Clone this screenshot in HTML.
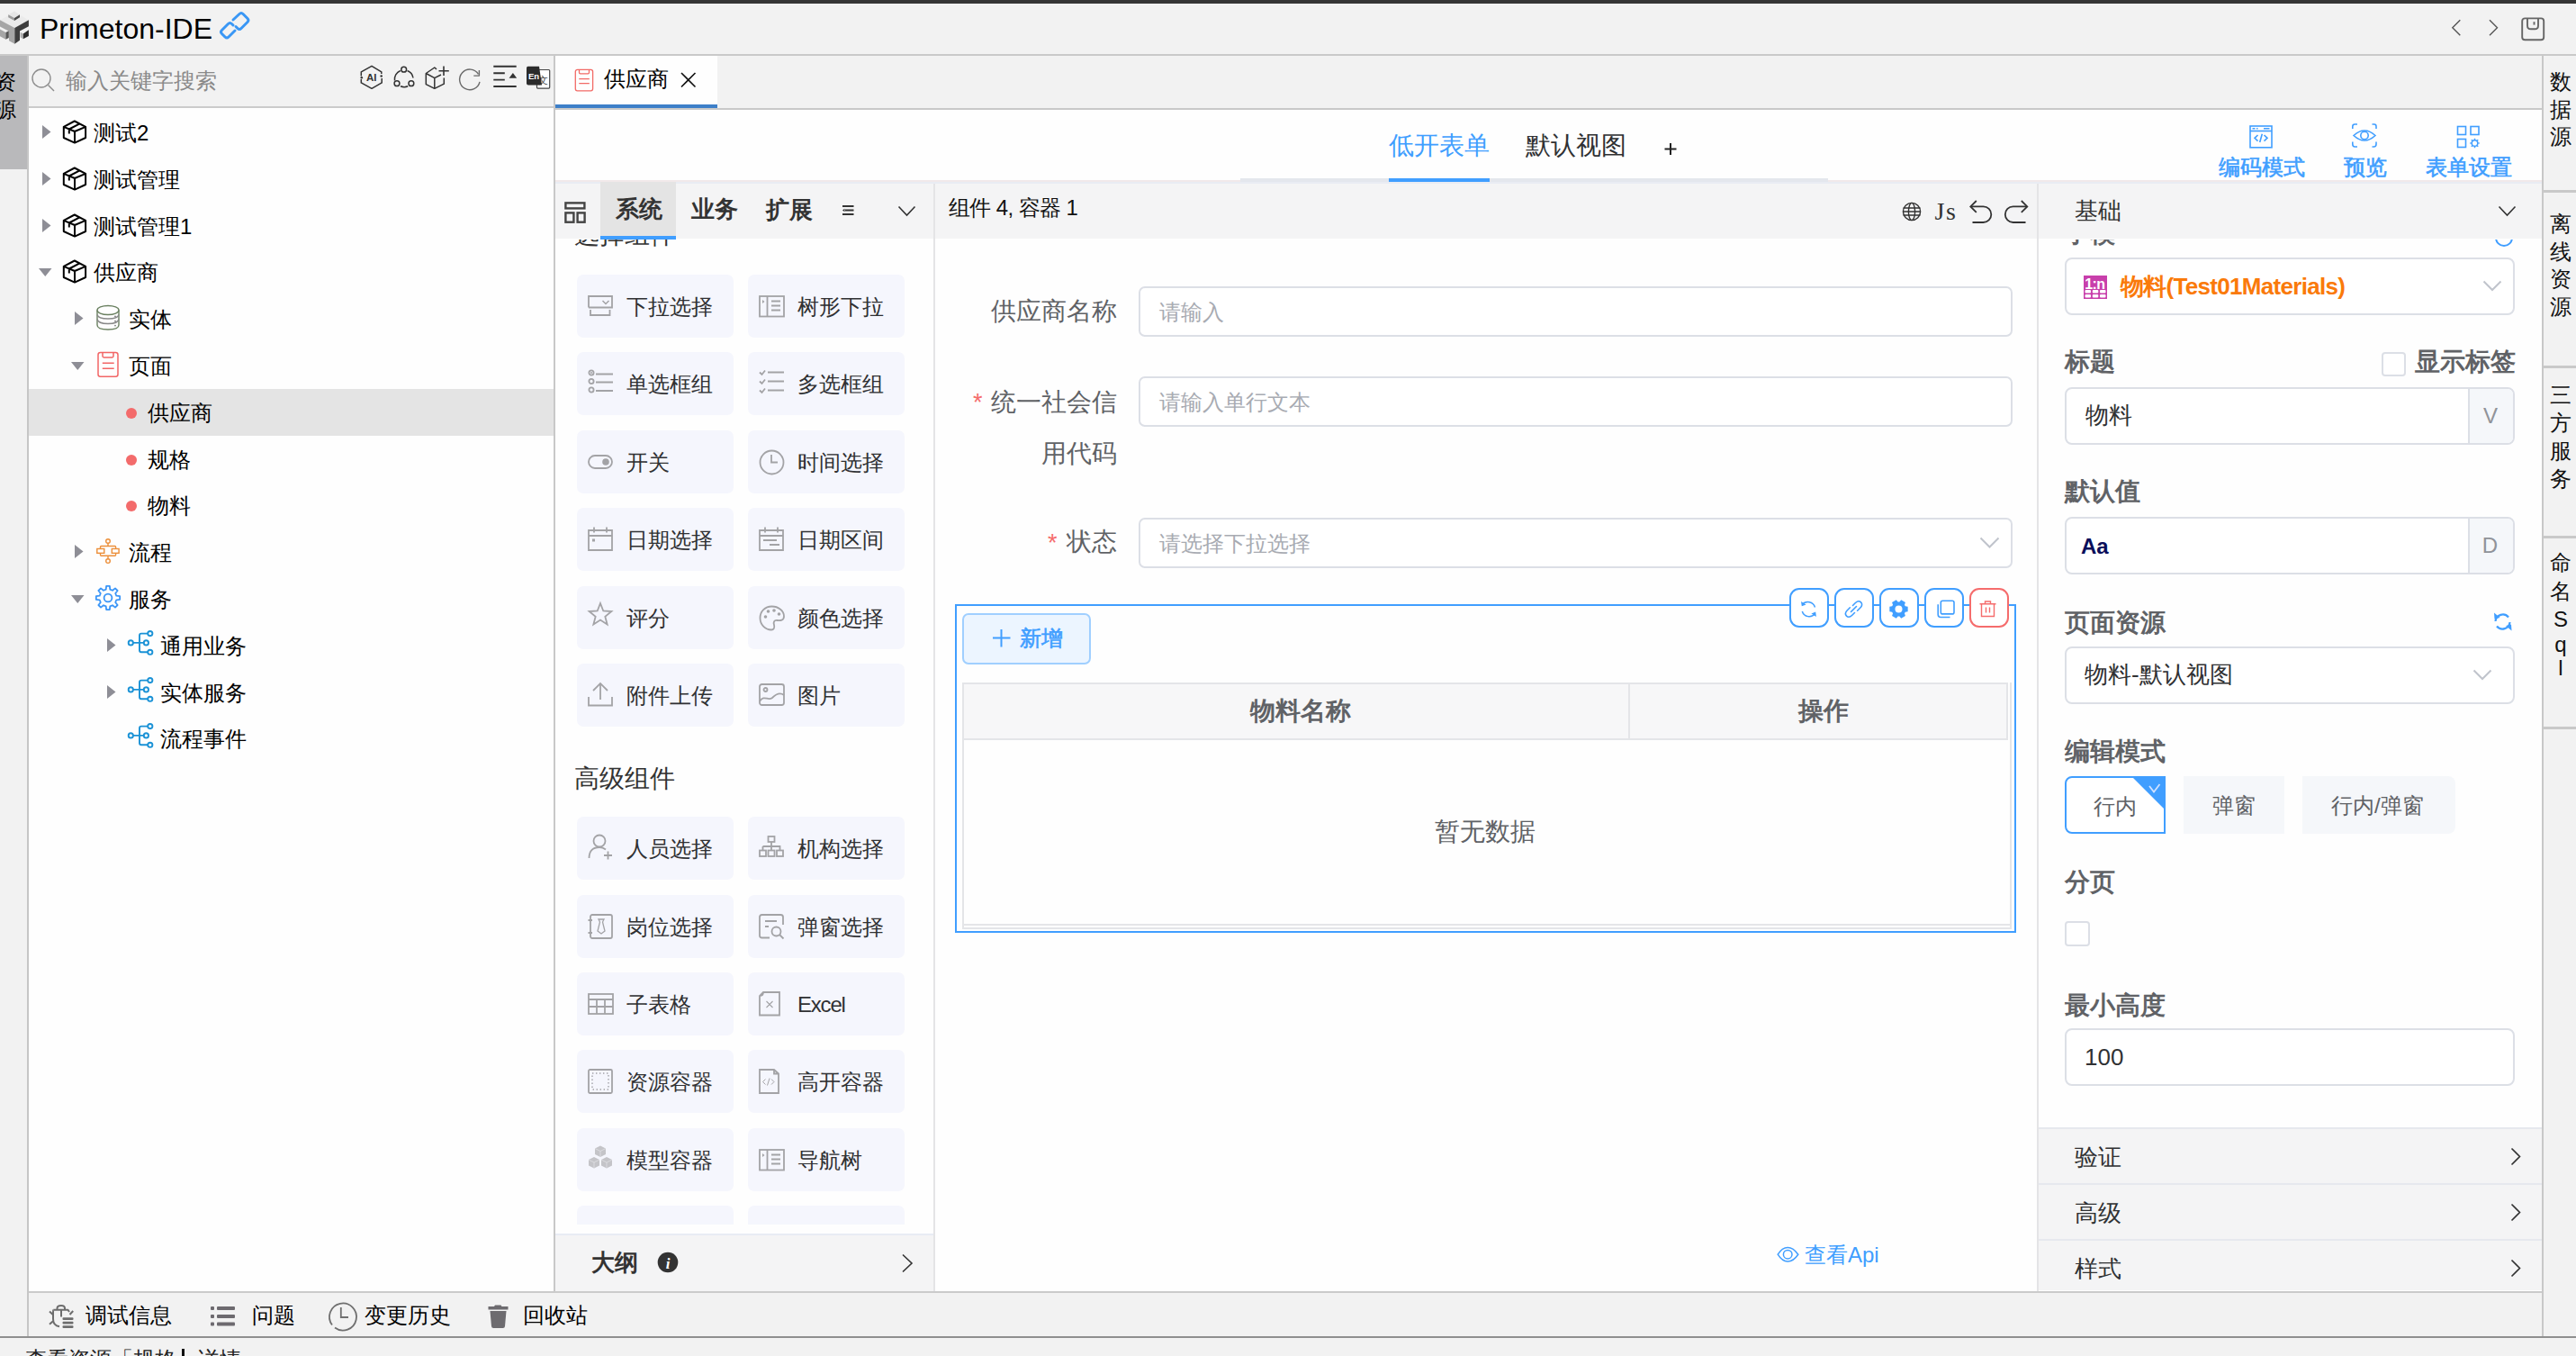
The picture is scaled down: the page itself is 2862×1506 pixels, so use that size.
<!DOCTYPE html>
<html><head><meta charset="utf-8">
<style>
*{box-sizing:border-box;margin:0;padding:0}
html,body{width:2862px;height:1506px;overflow:hidden;background:#f2f2f2;font-family:"Liberation Sans",sans-serif;color:#222}
.a{position:absolute}
.t{position:absolute;white-space:nowrap;line-height:1}
svg{position:absolute;overflow:visible}
</style></head><body>
<!-- frame -->
<!-- top dark strip -->
<div class="a" style="left:0;top:0;width:2862px;height:4px;background:#363636"></div>
<!-- title bar -->
<div class="a" style="left:0;top:4px;width:2862px;height:56px;background:#f2f2f2"></div>
<div class="a" style="left:0;top:60px;width:2862px;height:2px;background:#c9c9c9"></div>

<!-- left strip -->
<div class="a" style="left:0;top:62px;width:30px;height:1422px;background:#f2f2f2"></div>
<div class="a" style="left:0;top:62px;width:30px;height:126px;background:#b9b9bb"></div>
<div class="a" style="left:30px;top:62px;width:2px;height:1422px;background:#c6c6c6"></div>

<!-- left sidebar -->
<div class="a" id="side" style="left:32px;top:62px;width:584px;height:1372px;background:#fefefe"></div>
<div class="a" style="left:32px;top:62px;width:584px;height:56px;background:#f2f2f2"></div>
<div class="a" style="left:32px;top:118px;width:584px;height:2px;background:#cbcbcb"></div>
<div class="a" style="left:615px;top:62px;width:2px;height:1372px;background:#c8c8c8"></div>

<!-- editor tab bar -->
<div class="a" style="left:617px;top:62px;width:2207px;height:59px;background:#f2f2f2"></div>
<div class="a" style="left:617px;top:120px;width:2207px;height:2px;background:#c9c9c9"></div>
<!-- toolbar -->
<div class="a" style="left:617px;top:122px;width:2207px;height:79px;background:#fefefe"></div>
<!-- palette -->
<div class="a" style="left:617px;top:201px;width:421px;height:1233px;background:#fefefe"></div>
<div class="a" style="left:617px;top:201px;width:421px;height:64px;background:#f4f4f5"></div>
<div class="a" style="left:1037px;top:201px;width:2px;height:1233px;background:#e4e4e6"></div>
<!-- canvas -->
<div class="a" style="left:1039px;top:201px;width:1224px;height:1233px;background:#fefefe"></div>
<div class="a" style="left:1039px;top:201px;width:1224px;height:64px;background:#f4f4f5"></div>
<div class="a" style="left:2263px;top:201px;width:2px;height:1233px;background:#e4e4e6"></div>
<!-- props -->
<div class="a" style="left:2265px;top:201px;width:559px;height:1233px;background:#fefefe"></div>
<div class="a" style="left:2265px;top:201px;width:559px;height:64px;background:#f4f4f5"></div>

<!-- right strip -->
<div class="a" style="left:2824px;top:62px;width:2px;height:1422px;background:#c8c8c8"></div>
<div class="a" style="left:2826px;top:62px;width:36px;height:1422px;background:#f2f2f2"></div>

<!-- bottom bar -->
<div class="a" style="left:32px;top:1434px;width:2792px;height:2px;background:#cbcbcb"></div>
<div class="a" style="left:32px;top:1436px;width:2792px;height:48px;background:#f2f2f2"></div>
<div class="a" style="left:0;top:1484px;width:2862px;height:2px;background:#8f8f8f"></div>
<div class="a" style="left:0;top:1486px;width:2862px;height:20px;background:#f2f2f2"></div>


<!-- sidebar -->
<svg style="left:0;top:8px" width="40" height="48" viewBox="0 0 40 48">
<path d="M0 14.2 L16.3 5.5 L31.9 14.2 L16.3 23Z" fill="#ebebeb"/>
<path d="M0 14.2 L16.3 23 V40.7 L10 37.2 V26.8 L0 21.5Z" fill="#a6a6a6"/>
<path d="M16.3 23 L31.9 14.2 V21.2 L22 26.6 V36.8 L16.3 40.7Z" fill="#3e3e3e"/>
<path d="M9.2 8.2 L16 4.5 L22 8.2 L16 12Z" fill="#e6e6e6"/><path d="M9.2 8.2 L16 12 V15 L9.2 11.3Z" fill="#9c9c9c"/><path d="M16 12 L22 8.2 V11.3 L16 15Z" fill="#474747"/>
<path d="M22.6 27.7 L25.8 29.5 V35.3 L22.6 33.6Z" fill="#b0b0b0"/><path d="M25.8 29.5 L31.9 25.2 V32 L25.8 35.3Z" fill="#2b2b2b"/>
<path d="M0 24.5 L6.4 28 V35.7 L0 32.2Z" fill="#a6a6a6"/><path d="M6.4 28 L9.8 26.2 V34 L6.4 35.7Z" fill="#575757"/>
</svg>
<div class="t" style="left:44px;top:16px;font-size:32px;color:#000;letter-spacing:0px">Primeton-IDE</div>
<svg style="left:244px;top:12px" width="34" height="34" viewBox="0 0 34 34"><g fill="none" stroke="#3a97f5" stroke-width="3" stroke-linecap="round"><path d="M15 10 L22 3.5 Q24 1.5 26 3.5 L31 8.5 Q33 10.5 31 12.5 L24 19.5 Q22 21.5 20 19.5 L18 17.5"/><path d="M17 22 L10 29 Q8 31 6 29 L2.5 25.5 Q0.5 23.5 2.5 21.5 L9.5 14.5 Q11.5 12.5 13.5 14.5 L15 16"/></g></svg>
<div class="t" style="left:-6px;top:75px;font-size:24px;color:#000;line-height:31px;width:30px;white-space:normal">资<br>源</div>
<svg style="left:34px;top:75px" width="28" height="28" viewBox="0 0 28 28"><circle cx="12" cy="12" r="10" fill="none" stroke="#8c8c8c" stroke-width="1.4"/><path d="M19.5 19.5 L26 26" stroke="#8c8c8c" stroke-width="1.4"/></svg>
<div class="t" style="left:73px;top:78px;font-size:24px;color:#8a8a8a">输入关键字搜索</div>
<div class="a" style="left:32px;top:432px;width:583px;height:52px;background:#e4e4e4"></div>
<svg style="left:47px;top:139px" width="10" height="15"><path d="M0 0L9.5 7.5L0 15Z" fill="#8e8e96"/></svg>
<svg style="left:66px;top:130px" width="34" height="34"><path d="M16.8 4.5 L29.1 10.8 V23 L17 28.6 L4.8 23 V10.8 Z M4.8 10.8 L17 16 L29.1 10.8 M17 16 V28.6 M10.8 18.5 V13.5 L21.6 7.8" fill="none" stroke="#000" stroke-width="2" stroke-linejoin="round"/></svg>
<div class="t" style="left:104px;top:136px;font-size:24px;color:#000">测试2</div>
<svg style="left:47px;top:191px" width="10" height="15"><path d="M0 0L9.5 7.5L0 15Z" fill="#8e8e96"/></svg>
<svg style="left:66px;top:182px" width="34" height="34"><path d="M16.8 4.5 L29.1 10.8 V23 L17 28.6 L4.8 23 V10.8 Z M4.8 10.8 L17 16 L29.1 10.8 M17 16 V28.6 M10.8 18.5 V13.5 L21.6 7.8" fill="none" stroke="#000" stroke-width="2" stroke-linejoin="round"/></svg>
<div class="t" style="left:104px;top:188px;font-size:24px;color:#000">测试管理</div>
<svg style="left:47px;top:243px" width="10" height="15"><path d="M0 0L9.5 7.5L0 15Z" fill="#8e8e96"/></svg>
<svg style="left:66px;top:234px" width="34" height="34"><path d="M16.8 4.5 L29.1 10.8 V23 L17 28.6 L4.8 23 V10.8 Z M4.8 10.8 L17 16 L29.1 10.8 M17 16 V28.6 M10.8 18.5 V13.5 L21.6 7.8" fill="none" stroke="#000" stroke-width="2" stroke-linejoin="round"/></svg>
<div class="t" style="left:104px;top:240px;font-size:24px;color:#000">测试管理1</div>
<svg style="left:43px;top:298px" width="15" height="9"><path d="M0 0H14.5L7.25 9Z" fill="#8e8e96"/></svg>
<svg style="left:66px;top:285px" width="34" height="34"><path d="M16.8 4.5 L29.1 10.8 V23 L17 28.6 L4.8 23 V10.8 Z M4.8 10.8 L17 16 L29.1 10.8 M17 16 V28.6 M10.8 18.5 V13.5 L21.6 7.8" fill="none" stroke="#000" stroke-width="2" stroke-linejoin="round"/></svg>
<div class="t" style="left:104px;top:291px;font-size:24px;color:#000">供应商</div>
<svg style="left:83px;top:346px" width="10" height="15"><path d="M0 0L9.5 7.5L0 15Z" fill="#8e8e96"/></svg>
<svg style="left:104px;top:335px" width="34" height="34"><g fill="none" stroke="#6a8060" stroke-width="1.4"><ellipse cx="16" cy="9.5" rx="12" ry="5"/><path d="M4 9.5 V26 Q4 31 16 31 Q28 31 28 26 V9.5"/><path d="M4 14.5 Q5 19 16 19 Q27 19 28 14.5" stroke="#888"/><path d="M4 19.5 Q5 24.5 16 24.5 Q27 24.5 28 19.5" stroke="#888"/></g><g fill="#777"><circle cx="24" cy="16.3" r="0.9"/><circle cx="24" cy="21.6" r="0.9"/><circle cx="24" cy="26.6" r="0.9"/></g></svg>
<div class="t" style="left:142.5px;top:343px;font-size:24px;color:#000">实体</div>
<svg style="left:79px;top:402px" width="15" height="9"><path d="M0 0H14.5L7.25 9Z" fill="#8e8e96"/></svg>
<svg style="left:104px;top:388px" width="34" height="34"><g fill="none" stroke="#f26666" stroke-width="1.5"><rect x="5" y="3.5" width="22" height="26.8" rx="2.5"/><path d="M10 3.5 V7.5 Q10 8.9 11.4 8.9 H20.6 Q22 8.9 22 7.5 V3.5"/><path d="M9.8 15.2 H22.7 M9.8 21.3 H22.7"/></g></svg>
<div class="t" style="left:142.5px;top:395px;font-size:24px;color:#000">页面</div>
<div class="a" style="left:140px;top:453px;width:12px;height:12px;border-radius:6px;background:#f36b6b"></div>
<div class="t" style="left:164px;top:447px;font-size:24px;color:#000">供应商</div>
<div class="a" style="left:140px;top:505px;width:12px;height:12px;border-radius:6px;background:#f36b6b"></div>
<div class="t" style="left:164px;top:499px;font-size:24px;color:#000">规格</div>
<div class="a" style="left:140px;top:556px;width:12px;height:12px;border-radius:6px;background:#f36b6b"></div>
<div class="t" style="left:164px;top:550px;font-size:24px;color:#000">物料</div>
<svg style="left:83px;top:605px" width="10" height="15"><path d="M0 0L9.5 7.5L0 15Z" fill="#8e8e96"/></svg>
<svg style="left:104px;top:594px" width="34" height="34"><g fill="none" stroke="#ec8f3a" stroke-width="1.4"><circle cx="16" cy="7" r="2.3"/><circle cx="16" cy="29.1" r="2.3"/><path d="M16 9.3 V12.5 M16 23.3 V26.8"/><rect x="7.5" y="12.5" width="17.1" height="10.8" rx="1"/><rect x="3.8" y="15.5" width="8" height="4.8" fill="#fff"/><rect x="20.3" y="15.5" width="7.8" height="4.8" fill="#fff"/></g></svg>
<div class="t" style="left:142.5px;top:602px;font-size:24px;color:#000">流程</div>
<svg style="left:79px;top:661px" width="15" height="9"><path d="M0 0H14.5L7.25 9Z" fill="#8e8e96"/></svg>
<svg style="left:102px;top:647px" width="34" height="34"><g fill="none" stroke="#3a95f7" stroke-width="1.8" stroke-linejoin="round"><path d="M27.32 14.72 L31.17 15.14 L31.17 18.86 L27.32 19.28 L26.21 21.98 L28.62 25.00 L26.00 27.62 L22.98 25.21 L20.28 26.32 L19.86 30.17 L16.14 30.17 L15.72 26.32 L13.02 25.21 L10.00 27.62 L7.38 25.00 L9.79 21.98 L8.68 19.28 L4.83 18.86 L4.83 15.14 L8.68 14.72 L9.79 12.02 L7.38 9.00 L10.00 6.38 L13.02 8.79 L15.72 7.68 L16.14 3.83 L19.86 3.83 L20.28 7.68 L22.98 8.79 L26.00 6.38 L28.62 9.00 L26.21 12.02Z"/><circle cx="18" cy="17" r="4.4"/></g></svg>
<div class="t" style="left:142.5px;top:654px;font-size:24px;color:#000">服务</div>
<svg style="left:119px;top:709px" width="10" height="15"><path d="M0 0L9.5 7.5L0 15Z" fill="#8e8e96"/></svg>
<svg style="left:138px;top:697px" width="34" height="34"><g fill="none" stroke="#1b92d6" stroke-width="1.9"><circle cx="7.3" cy="16.9" r="2.6"/><circle cx="24.4" cy="16.9" r="2.6"/><circle cx="28.8" cy="6.6" r="2.6"/><circle cx="28.8" cy="27.3" r="2.6"/><path d="M9.9 16.9 H21.8 M26.2 6.6 H19 Q17 6.6 17 8.6 V25.3 Q17 27.3 19 27.3 H26.2"/></g></svg>
<div class="t" style="left:178px;top:706px;font-size:24px;color:#000">通用业务</div>
<svg style="left:119px;top:761px" width="10" height="15"><path d="M0 0L9.5 7.5L0 15Z" fill="#8e8e96"/></svg>
<svg style="left:138px;top:749px" width="34" height="34"><g fill="none" stroke="#1b92d6" stroke-width="1.9"><circle cx="7.3" cy="16.9" r="2.6"/><circle cx="24.4" cy="16.9" r="2.6"/><circle cx="28.8" cy="6.6" r="2.6"/><circle cx="28.8" cy="27.3" r="2.6"/><path d="M9.9 16.9 H21.8 M26.2 6.6 H19 Q17 6.6 17 8.6 V25.3 Q17 27.3 19 27.3 H26.2"/></g></svg>
<div class="t" style="left:178px;top:758px;font-size:24px;color:#000">实体服务</div>
<svg style="left:138px;top:800px" width="34" height="34"><g fill="none" stroke="#1b92d6" stroke-width="1.9"><circle cx="7.3" cy="16.9" r="2.6"/><circle cx="24.4" cy="16.9" r="2.6"/><circle cx="28.8" cy="6.6" r="2.6"/><circle cx="28.8" cy="27.3" r="2.6"/><path d="M9.9 16.9 H21.8 M26.2 6.6 H19 Q17 6.6 17 8.6 V25.3 Q17 27.3 19 27.3 H26.2"/></g></svg>
<div class="t" style="left:178px;top:809px;font-size:24px;color:#000">流程事件</div>
<svg style="left:394px;top:66px" width="224" height="40" viewBox="0 0 224 40">
<g fill="none" stroke="#333" stroke-width="1.5" stroke-linejoin="round">
<path d="M29.8 16 V13.8 L19 7.3 L7.3 13.8 V18.5"/><path d="M7.3 22 V25.9 L19 32.3 L30.2 25.9 V21"/>
<path d="M50.8 12.5 A10.3 10.3 0 0 0 44.5 23.5"/><path d="M58.6 12.5 A10.3 10.3 0 0 1 65 20.5"/><path d="M51 29.8 A10.3 10.3 0 0 0 59.2 29.8"/>
<circle cx="54.7" cy="11.2" r="2.9"/><circle cx="47" cy="26.7" r="2.9"/><circle cx="62.9" cy="26.7" r="2.9"/>
<path d="M91 10.8 L88.8 9 L79.3 15.5 V27.6 L88.8 32.3 L99.3 27.2 V20.5 M79.3 15.5 L88.8 20.7 L96 17 M88.8 20.7 V32.3"/><path d="M99 7.5 V18 M93.5 12.8 H104.8" stroke-width="1.6"/>
<g transform="translate(0,2.3)"><path d="M139 22.5 A11.3 11.3 0 1 1 137.5 14" stroke="#6a6a6a" stroke-width="1.4"/><path d="M138.4 9.8 V15.8 H132.3" stroke="#6a6a6a" stroke-width="1.4"/></g>
<path d="M154.3 7.8 H179.7 M154.3 15.3 H166.8 M154.3 22.6 H166.8 M154.3 30 H179.7" stroke-width="1.9"/>
</g>
<path d="M175.9 15.1 L180.2 20.7 H171.6Z" fill="#333"/>
<rect x="202.5" y="11.5" width="14.2" height="20.6" rx="1" fill="#fff" stroke="#444" stroke-width="1.2"/>
<text x="204" y="27" font-size="11" fill="#444">文</text>
<path d="M192.5 7.8 H205 L208 28.4 H193 Q191 28.4 191 26.4 V9.8 Q191 7.8 192.5 7.8Z" fill="#2b2b2b"/>
<text x="193" y="22" font-family="Liberation Sans" font-weight="bold" font-size="9.5" fill="#fff">En</text>
<text x="13" y="23.7" font-family="Liberation Sans" font-weight="bold" font-size="11.5" fill="#333">AI</text>
<circle cx="29.7" cy="18.5" r="1.3" fill="#333"/><circle cx="7.8" cy="20.3" r="1.3" fill="#333"/>
</svg>
<!-- tabs -->
<svg style="left:2720px;top:18px" width="110" height="30"><g fill="none" stroke="#555" stroke-width="1.4"><path d="M13.3 4.3 L4.8 12.8 L13.3 21.3"/><path d="M46 4.3 L54.5 12.8 L46 21.3"/></g><g fill="none" stroke="#666" stroke-width="1.9"><rect x="82.2" y="2.4" width="24" height="23.9" rx="3"/><path d="M88 2.4 V10.5 Q88 14.3 91.8 14.3 H96.2 Q100 14.3 100 10.5 V2.4"/><path d="M95.5 6.2 V9.6"/></g></svg>
<div class="a" style="left:617px;top:62px;width:180px;height:54px;background:#fefefe"></div>
<div class="a" style="left:617px;top:116px;width:180px;height:4px;background:#3d7fc8"></div>
<svg style="left:636px;top:75px" width="26" height="28"><g fill="none" stroke="#f26a66" stroke-width="1.3"><rect x="3.3" y="2.3" width="19.3" height="23.5" rx="2.2"/><path d="M7.5 2.3 V5.6 Q7.5 6.8 8.7 6.8 H17.3 Q18.5 6.8 18.5 5.6 V2.3"/><path d="M7.3 12.6 H18.8 M7.3 17.6 H18.8"/></g></svg>
<div class="t" style="left:671px;top:76px;font-size:24px;color:#000">供应商</div>
<svg style="left:756px;top:80px" width="18" height="18"><path d="M1 1 L16.5 16.5 M16.5 1 L1 16.5" stroke="#111" stroke-width="1.6"/></svg>
<div class="a" style="left:617px;top:200px;width:2207px;height:2px;background:#f1e9ea"></div>
<div class="a" style="left:1378px;top:198px;width:653px;height:4px;background:#e4e7ed"></div>
<div class="a" style="left:1543px;top:198px;width:112px;height:4px;background:#409eff"></div>
<div class="t" style="left:1543px;top:148px;font-size:28px;color:#409eff">低开表单</div>
<div class="t" style="left:1695px;top:148px;font-size:28px;color:#303133">默认视图</div>
<svg style="left:1849px;top:158px" width="16" height="16"><path d="M7 1 V14 M0.5 7.5 H13.5" stroke="#222" stroke-width="2"/></svg>
<svg style="left:2495px;top:135px" width="270" height="32"><g fill="none" stroke="#409eff" stroke-width="1.6">
<rect x="5" y="5" width="24" height="23.8"/><path d="M5 10.5 H29"/><path d="M7.5 7.7 H10.5 M12 7.7 H13.5 M20 7.7 H26.5" stroke-width="1.4"/>
<path d="M13.5 15 L10 18.3 L13.5 21.6 M20.5 15 L24 18.3 L20.5 21.6 M18.3 13.8 L15.7 23"/>
<path d="M118.8 8 V5.5 Q118.8 3 121.3 3 H124 M140.5 3 H142.8 Q145 3 145 5.5 V8 M145 22.5 V25 Q145 28 142.5 28 H140.5 M124 28 H121.3 Q118.8 28 118.8 25 V22.5"/>
<path d="M120 15.5 Q132 4.5 144 15.5 Q132 26.5 120 15.5Z"/><circle cx="132" cy="15.5" r="4.2"/>
<rect x="235.5" y="5.5" width="9" height="9"/><rect x="250" y="5.5" width="9" height="9"/><rect x="235.5" y="19.5" width="9" height="9"/>
</g><g fill="none" stroke="#409eff" stroke-width="1.5"><circle cx="254.5" cy="24" r="3.3"/><path d="M254.5 18.8 V20.2 M254.5 27.8 V29.2 M249.3 24 H250.7 M258.3 24 H259.7 M250.8 20.3 L251.8 21.3 M257.2 26.7 L258.2 27.7 M250.8 27.7 L251.8 26.7 M257.2 21.3 L258.2 20.3"/></g></svg>
<div class="t" style="left:2465px;top:174px;font-size:24px;color:#409eff;-webkit-text-stroke:0.6px #409eff">编码模式</div>
<div class="t" style="left:2604px;top:174px;font-size:24px;color:#409eff;-webkit-text-stroke:0.6px #409eff">预览</div>
<div class="t" style="left:2695px;top:174px;font-size:24px;color:#409eff;-webkit-text-stroke:0.6px #409eff">表单设置</div>
<div class="a" style="left:617px;top:202px;width:2207px;height:2px;background:#e9ecf3"></div>
<div class="a" style="left:667px;top:202px;width:84px;height:60px;background:#e4e4e4"></div>
<div class="a" style="left:667px;top:262px;width:84px;height:4px;background:#409eff"></div>
<svg style="left:626px;top:223px" width="26" height="26"><g fill="none" stroke="#444" stroke-width="2.4"><rect x="2.4" y="2.4" width="21" height="6"/><rect x="2.4" y="13.4" width="9" height="10.3"/><rect x="15.6" y="13.4" width="8" height="10.3"/></g></svg>
<div class="t" style="left:684px;top:219px;font-size:26px;color:#333;font-weight:bold">系统</div>
<div class="t" style="left:768px;top:219px;font-size:26px;color:#333;font-weight:bold">业务</div>
<div class="t" style="left:851px;top:220px;font-size:26px;color:#333;font-weight:bold">扩展</div>
<svg style="left:935px;top:227px" width="16" height="14"><g stroke="#333" stroke-width="1.8"><path d="M1 2 H13.5 M4 6.5 H13.5 M1 11 H13.5"/></g><path d="M1 6.5 L3.5 4.8 V8.2Z" fill="#333"/></svg>
<svg style="left:997px;top:228px" width="22" height="14"><path d="M1.5 1.5 L10.5 11 L19.5 1.5" fill="none" stroke="#333" stroke-width="1.6"/></svg>
<div class="t" style="left:1054px;top:219px;font-size:24px;color:#111;letter-spacing:-0.6px">组件 4, 容器 1</div>
<svg style="left:2110px;top:220px" width="150" height="32"><g fill="none" stroke="#333" stroke-width="1.4">
<circle cx="14" cy="15" r="9.6"/><ellipse cx="14" cy="15" rx="3.6" ry="9.6"/><path d="M4.6 11 H23.4 M4.4 15 H23.6 M4.6 19 H23.4"/></g>
<g fill="none" stroke="#333" stroke-width="1.8"><path d="M85.8 3 L79.3 9.4 L85.8 15.8"/><path d="M80 9.4 H93.5 A8.8 8.8 0 0 1 93.5 27 H81.5"/><path d="M135.8 3 L142.3 9.4 L135.8 15.8"/><path d="M141.6 9.4 H126.6 A8.8 8.8 0 0 0 126.6 27 H140.5"/></g>
<text x="39.5" y="24.2" font-family="Liberation Serif" font-size="28" letter-spacing="1.5" fill="#333">Js</text></svg>
<div class="t" style="left:2305px;top:221px;font-size:26px;color:#333">基础</div>
<svg style="left:2775px;top:228px" width="22" height="14"><path d="M1.5 1.5 L10.5 11 L19.5 1.5" fill="none" stroke="#333" stroke-width="1.6"/></svg>
<!-- palette -->
<div class="a" style="left:617px;top:266px;width:420px;height:1094px;overflow:hidden">
<div class="t" style="left:21px;top:-19px;font-size:28px;color:#333">选择组件</div>
<div class="t" style="left:21px;top:585px;font-size:28px;color:#333">高级组件</div>
<div class="a" style="left:24px;top:39px;width:174px;height:70px;border-radius:7px;background:#f5f6fd"></div>
<svg style="left:35px;top:61px" width="32" height="32"><g transform="translate(1,1)"><g fill="none" stroke="#a3a3a6" stroke-width="1.8"><path d="M1 13.5 V1 H27 V13.5 H1"/><path d="M16.5 6 L20 9.5 L23.5 6" stroke-width="1.5"/><path d="M3 16 V22 H24.5 V16"/></g></g></svg>
<div class="t" style="left:79px;top:63px;font-size:24px;color:#303133">下拉选择</div>
<div class="a" style="left:214px;top:39px;width:174px;height:70px;border-radius:7px;background:#f5f6fd"></div>
<svg style="left:225px;top:61px" width="32" height="32"><g transform="translate(1,1)"><g fill="none" stroke="#a3a3a6" stroke-width="1.8"><rect x="1" y="1" width="27" height="22.5"/><path d="M9.5 1 V23.5"/><path d="M14 6.5 H24 M14 11.5 H24 M14 16.5 H24"/></g><path d="M4 5 L6.5 7 L4 9Z" fill="#a3a3a6"/></g></svg>
<div class="t" style="left:269px;top:63px;font-size:24px;color:#303133">树形下拉</div>
<div class="a" style="left:24px;top:125px;width:174px;height:70px;border-radius:7px;background:#f5f6fd"></div>
<svg style="left:35px;top:144px" width="32" height="32"><g transform="translate(1,1)"><g fill="none" stroke="#a3a3a6" stroke-width="1.8" stroke-width="1.3"><circle cx="4" cy="3" r="2.6"/><circle cx="4" cy="12.5" r="2.6"/><circle cx="4" cy="22" r="2.6"/></g><circle cx="4" cy="3" r="1" fill="#a3a3a6"/><g fill="none" stroke="#a3a3a6" stroke-width="1.8" stroke-width="2"><path d="M9 4.5 H28 M9 13.5 H28 M9 23 H28"/></g></g></svg>
<div class="t" style="left:79px;top:149px;font-size:24px;color:#303133">单选框组</div>
<div class="a" style="left:214px;top:125px;width:174px;height:70px;border-radius:7px;background:#f5f6fd"></div>
<svg style="left:225px;top:144px" width="32" height="32"><g transform="translate(1,1)"><g fill="none" stroke="#a3a3a6" stroke-width="1.8" stroke-width="1.4"><path d="M1 2.5 L3.5 5 L7 0.5 M1 12.5 L3.5 15 L7 10.5 M1 22.5 L3.5 25 L7 20.5"/></g><g fill="none" stroke="#a3a3a6" stroke-width="1.8" stroke-width="2"><path d="M10 2.5 H28 M10 12.5 H28 M10 22.5 H28"/></g></g></svg>
<div class="t" style="left:269px;top:149px;font-size:24px;color:#303133">多选框组</div>
<div class="a" style="left:24px;top:212px;width:174px;height:70px;border-radius:7px;background:#f5f6fd"></div>
<svg style="left:35px;top:238px" width="32" height="32"><g transform="translate(1,1)"><g fill="none" stroke="#a3a3a6" stroke-width="1.8" stroke-width="1.6"><rect x="1" y="1" width="26" height="14" rx="7"/></g><circle cx="20" cy="8" r="3.8" fill="#a3a3a6"/></g></svg>
<div class="t" style="left:79px;top:236px;font-size:24px;color:#303133">开关</div>
<div class="a" style="left:214px;top:212px;width:174px;height:70px;border-radius:7px;background:#f5f6fd"></div>
<svg style="left:225px;top:232px" width="32" height="32"><g transform="translate(1,1)"><g fill="none" stroke="#a3a3a6" stroke-width="1.8"><circle cx="14.5" cy="14.5" r="13"/><path d="M14 6 V14.5 H21"/></g></g></svg>
<div class="t" style="left:269px;top:236px;font-size:24px;color:#303133">时间选择</div>
<div class="a" style="left:24px;top:298px;width:174px;height:70px;border-radius:7px;background:#f5f6fd"></div>
<svg style="left:35px;top:318px" width="32" height="32"><g transform="translate(1,1)"><g fill="none" stroke="#a3a3a6" stroke-width="1.8"><path d="M1 4 H27 V26 H1Z M1 10 H27 M7 0.5 V6.5 M21 0.5 V6.5"/></g><rect x="5" y="13.5" width="3" height="3" fill="#a3a3a6"/></g></svg>
<div class="t" style="left:79px;top:322px;font-size:24px;color:#303133">日期选择</div>
<div class="a" style="left:214px;top:298px;width:174px;height:70px;border-radius:7px;background:#f5f6fd"></div>
<svg style="left:225px;top:318px" width="32" height="32"><g transform="translate(1,1)"><g fill="none" stroke="#a3a3a6" stroke-width="1.8"><path d="M1 4 H27 V26 H1Z M1 10 H27 M7 0.5 V6.5 M21 0.5 V6.5 M5 15 H20 M12 20 H23"/></g></g></svg>
<div class="t" style="left:269px;top:322px;font-size:24px;color:#303133">日期区间</div>
<div class="a" style="left:24px;top:385px;width:174px;height:70px;border-radius:7px;background:#f5f6fd"></div>
<svg style="left:35px;top:402px" width="32" height="32"><g transform="translate(1,1)"><g fill="none" stroke="#a3a3a6" stroke-width="1.8"><path d="M14.00 1.00 L17.29 9.47 L26.36 9.98 L19.33 15.73 L21.64 24.52 L14.00 19.60 L6.36 24.52 L8.67 15.73 L1.64 9.98 L10.71 9.47Z"/></g></g></svg>
<div class="t" style="left:79px;top:409px;font-size:24px;color:#303133">评分</div>
<div class="a" style="left:214px;top:385px;width:174px;height:70px;border-radius:7px;background:#f5f6fd"></div>
<svg style="left:225px;top:405px" width="32" height="32"><g transform="translate(1,1)"><g fill="none" stroke="#a3a3a6" stroke-width="1.8"><path d="M14.5 1.5 C22 1.5 28 6.5 28 12.5 C28 17 24 17.5 20.5 17 C17 16.5 16 19 17 22 C18 25.5 16.5 27.5 14 27.5 C7 27.5 1.5 21.5 1.5 14.5 C1.5 7 7 1.5 14.5 1.5Z"/></g><g fill="#a3a3a6"><circle cx="7.5" cy="13" r="1.8"/><circle cx="10.5" cy="7" r="1.8"/><circle cx="17" cy="6" r="1.8"/><circle cx="22.5" cy="10" r="1.8"/></g></g></svg>
<div class="t" style="left:269px;top:409px;font-size:24px;color:#303133">颜色选择</div>
<div class="a" style="left:24px;top:471px;width:174px;height:70px;border-radius:7px;background:#f5f6fd"></div>
<svg style="left:35px;top:490px" width="32" height="32"><g transform="translate(1,1)"><g fill="none" stroke="#a3a3a6" stroke-width="1.8" stroke-width="2"><path d="M14 20 V2.5 M6 10 L14 2 L22 10"/><path d="M1 17 V26.5 H27 V17"/></g></g></svg>
<div class="t" style="left:79px;top:495px;font-size:24px;color:#303133">附件上传</div>
<div class="a" style="left:214px;top:471px;width:174px;height:70px;border-radius:7px;background:#f5f6fd"></div>
<svg style="left:225px;top:492px" width="32" height="32"><g transform="translate(1,1)"><g fill="none" stroke="#a3a3a6" stroke-width="1.8"><rect x="1" y="1" width="27" height="23" rx="2.5"/><circle cx="7.5" cy="7" r="2"/><path d="M1 20 C6 12 10 20 15 16 C19 12 24 10 28 13"/></g></g></svg>
<div class="t" style="left:269px;top:495px;font-size:24px;color:#303133">图片</div>
<div class="a" style="left:24px;top:641px;width:174px;height:70px;border-radius:7px;background:#f5f6fd"></div>
<svg style="left:35px;top:659px" width="32" height="32"><g transform="translate(1,1)"><g fill="none" stroke="#a3a3a6" stroke-width="1.8" stroke-width="1.6"><circle cx="13" cy="8" r="6.5"/><path d="M1.5 27 C1.5 19 6 15 13 15 C16 15 18 16 20 17.5"/><path d="M22.5 19.5 V28.5 M18 24 H27"/></g></g></svg>
<div class="t" style="left:79px;top:665px;font-size:24px;color:#303133">人员选择</div>
<div class="a" style="left:214px;top:641px;width:174px;height:70px;border-radius:7px;background:#f5f6fd"></div>
<svg style="left:225px;top:661px" width="32" height="32"><g transform="translate(1,1)"><g fill="none" stroke="#a3a3a6" stroke-width="1.8" stroke-width="2"><rect x="10.5" y="1" width="7" height="6"/><path d="M14 7 V12 M4.5 12 H23.5 V16 M4.5 12 V16 M14 12 V16"/><rect x="1" y="16.5" width="7" height="6.5"/><rect x="10.5" y="16.5" width="7" height="6.5"/><rect x="20" y="16.5" width="7" height="6.5"/></g></g></svg>
<div class="t" style="left:269px;top:665px;font-size:24px;color:#303133">机构选择</div>
<div class="a" style="left:24px;top:728px;width:174px;height:70px;border-radius:7px;background:#f5f6fd"></div>
<svg style="left:35px;top:748px" width="32" height="32"><g transform="translate(1,1)"><g fill="none" stroke="#a3a3a6" stroke-width="1.8" stroke-width="1.6"><rect x="3" y="1" width="24" height="26" rx="2"/><path d="M0.5 7 H5 M0.5 21 H5"/><path d="M12 6 H18 L16.5 9 L19 19 L15 22 L11 19 L13.5 9Z" stroke-width="1.3"/></g></g></svg>
<div class="t" style="left:79px;top:752px;font-size:24px;color:#303133">岗位选择</div>
<div class="a" style="left:214px;top:728px;width:174px;height:70px;border-radius:7px;background:#f5f6fd"></div>
<svg style="left:225px;top:748px" width="32" height="32"><g transform="translate(1,1)"><g fill="none" stroke="#a3a3a6" stroke-width="1.8" stroke-width="1.9"><path d="M12 26.5 H3.5 Q1 26.5 1 24 V3.5 Q1 1 3.5 1 H24.5 Q27 1 27 3.5 V12"/><path d="M7 8 H20 M7 14 H11"/><circle cx="19.5" cy="19.5" r="5"/><path d="M23 23 L27.5 27.5"/></g></g></svg>
<div class="t" style="left:269px;top:752px;font-size:24px;color:#303133">弹窗选择</div>
<div class="a" style="left:24px;top:814px;width:174px;height:70px;border-radius:7px;background:#f5f6fd"></div>
<svg style="left:35px;top:836px" width="32" height="32"><g transform="translate(1,1)"><g fill="none" stroke="#a3a3a6" stroke-width="1.8" stroke-width="2"><rect x="1" y="1" width="27" height="22"/><path d="M1 7 H28 M1 15 H28 M10 7 V23 M19 7 V23"/></g></g></svg>
<div class="t" style="left:79px;top:838px;font-size:24px;color:#303133">子表格</div>
<div class="a" style="left:214px;top:814px;width:174px;height:70px;border-radius:7px;background:#f5f6fd"></div>
<svg style="left:225px;top:834px" width="32" height="32"><g transform="translate(1,1)"><g fill="none" stroke="#a3a3a6" stroke-width="1.8" stroke-width="1.2"><path d="M5 1 H23 V26.5 H1 V5 Z M1 5 Q5 5 5 1"/><path d="M8.5 11 L15.5 18 M15.5 11 L8.5 18" stroke-width="1.1"/></g></g></svg>
<div class="t" style="left:269px;top:838px;font-size:24px;color:#303133;letter-spacing:-1.2px">Excel</div>
<div class="a" style="left:24px;top:900px;width:174px;height:70px;border-radius:7px;background:#f5f6fd"></div>
<svg style="left:35px;top:920px" width="32" height="32"><g transform="translate(1,1)"><g fill="none" stroke="#a3a3a6" stroke-width="1.8" stroke-width="2"><rect x="1" y="1" width="26" height="26" rx="1.5"/></g><rect x="5" y="5" width="18" height="18" fill="none" stroke="#a3a3a6" stroke-width="1.4" stroke-dasharray="1.4 2.6"/></g></svg>
<div class="t" style="left:79px;top:924px;font-size:24px;color:#303133">资源容器</div>
<div class="a" style="left:214px;top:900px;width:174px;height:70px;border-radius:7px;background:#f5f6fd"></div>
<svg style="left:225px;top:920px" width="32" height="32"><g transform="translate(1,1)"><g fill="none" stroke="#a3a3a6" stroke-width="1.8" stroke-width="1.2"><path d="M1 1 H17 L22 5.5 V27 H1Z M17 1 V5.5 H22"/><path d="M7.5 11.5 L4.5 14.5 L7.5 17.5 M14 11.5 L17 14.5 L14 17.5 M12 10.5 L9.5 18.5" stroke-width="1"/></g></g></svg>
<div class="t" style="left:269px;top:924px;font-size:24px;color:#303133">高开容器</div>
<div class="a" style="left:24px;top:987px;width:174px;height:70px;border-radius:7px;background:#f5f6fd"></div>
<svg style="left:35px;top:1005px" width="32" height="32"><g transform="translate(1,1)"><g fill="#c4c4c8"><path d="M14 0.5 L20 3.5 V10 L14 13 L8 10 V3.5Z"/><path d="M7 13 L13 16 V22.5 L7 25.5 L1 22.5 V16Z"/><path d="M21 13 L27 16 V22.5 L21 25.5 L15 22.5 V16Z"/></g><g fill="none" stroke="#e0e0e4" stroke-width="0.8"><path d="M8 3.5 L14 6.5 L20 3.5 M14 6.5 V13 M1 16 L7 19 L13 16 M7 19 V25.5 M15 16 L21 19 L27 16 M21 19 V25.5"/></g></g></svg>
<div class="t" style="left:79px;top:1011px;font-size:24px;color:#303133">模型容器</div>
<div class="a" style="left:214px;top:987px;width:174px;height:70px;border-radius:7px;background:#f5f6fd"></div>
<svg style="left:225px;top:1009px" width="32" height="32"><g transform="translate(1,1)"><g fill="none" stroke="#a3a3a6" stroke-width="1.8"><rect x="1" y="1" width="27" height="22.5"/><path d="M9.5 1 V23.5"/><path d="M14 6.5 H24 M14 11.5 H24 M14 16.5 H24"/></g><path d="M4 5 L6.5 7 L4 9Z" fill="#a3a3a6"/></g></svg>
<div class="t" style="left:269px;top:1011px;font-size:24px;color:#303133">导航树</div>
<div class="a" style="left:24px;top:1073px;width:174px;height:70px;border-radius:7px;background:#f5f6fd"></div>
<div class="a" style="left:214px;top:1073px;width:174px;height:70px;border-radius:7px;background:#f5f6fd"></div>
</div>
<div class="a" style="left:617px;top:1370px;width:420px;height:2px;background:#e8ecf4"></div>
<div class="a" style="left:617px;top:1372px;width:420px;height:62px;background:#f4f4f5"></div>
<div class="t" style="left:657px;top:1389px;font-size:26px;color:#333;font-weight:bold">大纲</div>
<svg style="left:730px;top:1390px" width="24" height="24"><circle cx="12" cy="12" r="11.3" fill="#333"/><text x="12" y="18.5" text-anchor="middle" font-family="Liberation Serif" font-style="italic" font-weight="bold" font-size="17" fill="#fff">i</text></svg>
<svg style="left:1001px;top:1392px" width="16" height="22"><path d="M2 1.5 L12 11 L2 20.5" fill="none" stroke="#333" stroke-width="1.6"/></svg>
<!-- canvas -->
<div class="a" style="left:1265px;top:318px;width:971px;height:56px;border:2px solid #dcdfe6;border-radius:7px;background:#fff"></div><div class="t" style="left:1288px;top:335px;font-size:24px;color:#a8abb2">请输入</div>
<div class="t" style="left:1101px;top:332px;font-size:28px;color:#606266">供应商名称</div>
<div class="a" style="left:1265px;top:418px;width:971px;height:56px;border:2px solid #dcdfe6;border-radius:7px;background:#fff"></div><div class="t" style="left:1288px;top:435px;font-size:24px;color:#a8abb2">请输入单行文本</div>
<div class="t" style="left:1081px;top:434px;font-size:27px;color:#f56c6c">*</div>
<div class="t" style="left:1101px;top:433px;font-size:28px;color:#606266">统一社会信</div>
<div class="t" style="left:1157px;top:490px;font-size:28px;color:#606266">用代码</div>
<div class="a" style="left:1265px;top:575px;width:971px;height:56px;border:2px solid #dcdfe6;border-radius:7px;background:#fff"></div><div class="t" style="left:1288px;top:592px;font-size:24px;color:#a8abb2">请选择下拉选择</div><svg style="left:2199px;top:596px" width="24" height="14"><path d="M1.5 1.5 L11.5 11.5 L21.5 1.5" fill="none" stroke="#c0c4cc" stroke-width="2"/></svg>
<div class="t" style="left:1164px;top:590px;font-size:27px;color:#f56c6c">*</div>
<div class="t" style="left:1185px;top:588px;font-size:28px;color:#606266">状态</div>
<div class="a" style="left:1061px;top:671px;width:1179px;height:365px;border:2px solid #409eff"></div>
<div class="a" style="left:2031px;top:671px;width:158px;height:2px;background:#409eff"></div>
<div class="a" style="left:1988px;top:653px;width:44px;height:44px;border:2px solid #409eff;border-radius:11px;background:#fff"></div>
<svg style="left:1988px;top:654.5px" width="44" height="44"><g fill="none" stroke="#409eff" stroke-width="1.5"><path d="M28.5 19.5 A8.2 8.2 0 0 0 14.3 16.5"/><path d="M14.3 24 A8.2 8.2 0 0 0 28.6 26.6"/></g><path d="M13 13 L13.8 18.3 L18.6 16.4Z M29.9 30 L29.2 24.6 L24.4 26.6Z" fill="#409eff"/></svg>
<div class="a" style="left:2038px;top:653px;width:44px;height:44px;border:2px solid #409eff;border-radius:11px;background:#fff"></div>
<svg style="left:2038px;top:654.5px" width="44" height="44"><g fill="none" stroke="#409eff" stroke-width="1.6" stroke-linecap="round"><path d="M20.5 17.5 L23.2 14.8 Q26.8 11.2 29.5 13.9 Q32.2 16.6 28.6 20.2 L25.6 23.2"/><path d="M22.5 25.5 L19.8 28.2 Q16.2 31.8 13.5 29.1 Q10.8 26.4 14.4 22.8 L17.4 19.8"/><path d="M18.5 24.5 L24.5 18.5"/></g></svg>
<div class="a" style="left:2088px;top:653px;width:44px;height:44px;border:2px solid #409eff;border-radius:11px;background:#fff"></div>
<svg style="left:2088px;top:654.5px" width="44" height="44"><path d="M28.80 18.24 L31.65 18.80 L31.65 24.20 L28.80 24.76 L27.98 26.20 L28.91 28.94 L24.24 31.64 L22.33 29.46 L20.67 29.46 L18.76 31.64 L14.09 28.94 L15.02 26.20 L14.20 24.76 L11.35 24.20 L11.35 18.80 L14.20 18.24 L15.02 16.80 L14.09 14.06 L18.76 11.36 L20.67 13.54 L22.33 13.54 L24.24 11.36 L28.91 14.06 L27.98 16.80Z" fill="#409eff"/><circle cx="21.5" cy="21.5" r="4" fill="#fff"/></svg>
<div class="a" style="left:2138px;top:653px;width:44px;height:44px;border:2px solid #409eff;border-radius:11px;background:#fff"></div>
<svg style="left:2138px;top:654.5px" width="44" height="44"><g fill="none" stroke="#409eff" stroke-width="1.6"><rect x="18.3" y="12.2" width="14.7" height="14.7" rx="2"/><path d="M15.2 16.3 V27.5 Q15.2 30.5 18.2 30.5 H28.5"/></g></svg>
<div class="a" style="left:2188px;top:653px;width:44px;height:44px;border:2px solid #f56c6c;border-radius:11px;background:#fff"></div>
<svg style="left:2188px;top:654.5px" width="44" height="44"><g fill="none" stroke="#f56c6c" stroke-width="1.4"><path d="M11.5 15.8 H29.5 M17.5 15.8 V13 H23.5 V15.8 M13.5 15.8 V29.5 H27.5 V15.8 M18.5 19.5 V25.5 M22.5 19.5 V25.5"/></g></svg>
<div class="a" style="left:1069px;top:681px;width:143px;height:57px;border:2px solid #a0cfff;border-radius:7px;background:#ecf5ff"></div>
<svg style="left:1102px;top:698px" width="22" height="22"><path d="M10.5 1 V20.5 M1 10.5 H20.5" stroke="#409eff" stroke-width="2"/></svg>
<div class="t" style="left:1133px;top:697px;font-size:24px;color:#409eff;-webkit-text-stroke:0.6px #409eff">新增</div>
<div class="a" style="left:1069px;top:758px;width:1166px;height:274px;border:2px solid #e4e5e8;border-top:none"></div>
<div class="a" style="left:1069px;top:758px;width:1162px;height:64px;background:#f7f7f8;border:2px solid #e4e5e8"></div>
<div class="a" style="left:1809px;top:758px;width:2px;height:64px;background:#e4e5e8"></div>
<div class="a" style="left:1069px;top:1026px;width:1166px;height:2px;background:#e4e5e8"></div>
<div class="t" style="left:1389px;top:776px;font-size:28px;color:#606266;font-weight:bold">物料名称</div>
<div class="t" style="left:1998px;top:776px;font-size:28px;color:#606266;font-weight:bold">操作</div>
<div class="t" style="left:1594px;top:910px;font-size:28px;color:#606266">暂无数据</div>
<svg style="left:1974px;top:1384px" width="26" height="20"><g fill="none" stroke="#409eff" stroke-width="1.5"><path d="M1.2 9.2 Q6 1.4 12.2 1.4 Q18.4 1.4 23.8 9.2 Q18.4 17 12.2 17 Q6 17 1.2 9.2Z"/><circle cx="12.2" cy="9.2" r="4.8"/></g></svg>
<div class="t" style="left:2005px;top:1382px;font-size:24px;color:#409eff">查看Api</div>
<!-- props -->
<div class="a" style="left:2265px;top:266px;width:559px;height:20px;overflow:hidden"><div class="t" style="left:29px;top:-20px;font-size:28px;color:#606266;font-weight:bold">子模</div><svg style="left:2770px;top:-20px" width="1" height="1"></svg></div>
<div class="a" style="left:2265px;top:266px;width:559px;height:8px;overflow:hidden"><svg style="left:505px;top:-14px" width="24" height="24"><path d="M3 12 A9 9 0 0 0 21 12" fill="none" stroke="#409eff" stroke-width="2"/></svg></div>
<div class="a" style="left:2294px;top:286px;width:500px;height:64px;border:2px solid #dcdfe6;border-radius:8px;background:#fff;overflow:hidden"></div>
<svg style="left:2758px;top:311px" width="24" height="14"><path d="M1.5 1.5 L11 11 L20.5 1.5" fill="none" stroke="#c0c4cc" stroke-width="2"/></svg>
<svg style="left:2315px;top:306px" width="26" height="26"><rect width="26" height="26" fill="#c83fab"/>
<g fill="#fff"><text x="1.2" y="14.9" font-family="Liberation Sans" font-weight="bold" font-size="16" letter-spacing="-0.6">1:n</text>
<rect x="1.5" y="16.1" width="6.5" height="3.4" rx="1"/><rect x="9.8" y="16.1" width="6.5" height="3.4" rx="1"/><rect x="18" y="16.1" width="6.5" height="3.4" rx="1"/>
<rect x="1.5" y="21.1" width="6.5" height="3.4" rx="1"/><rect x="9.8" y="21.1" width="6.5" height="3.4" rx="1"/><rect x="18" y="21.1" width="6.5" height="3.4" rx="1"/></g></svg>
<div class="t" style="left:2356px;top:305px;font-size:26px;color:#fa7a0a;font-weight:bold;letter-spacing:-0.7px">物料(Test01Materials)</div>
<div class="t" style="left:2294px;top:388px;font-size:28px;color:#606266;font-weight:bold">标题</div>
<div class="a" style="left:2646px;top:391px;width:27px;height:27px;border:2px solid #dcdfe6;border-radius:4px;background:#fff"></div>
<div class="t" style="left:2683px;top:388px;font-size:28px;color:#606266;font-weight:bold">显示标签</div>
<div class="a" style="left:2294px;top:430px;width:500px;height:64px;border:2px solid #dcdfe6;border-radius:8px;background:#fff;overflow:hidden"><div class="a" style="right:0;top:0;width:50px;height:100%;background:#f5f7fa;border-left:2px solid #dcdfe6"></div><div class="t" style="right:17px;top:18px;font-size:24px;color:#909399">V</div></div>
<div class="t" style="left:2317px;top:448px;font-size:26px;color:#303133">物料</div>
<div class="t" style="left:2294px;top:532px;font-size:28px;color:#606266;font-weight:bold">默认值</div>
<div class="a" style="left:2294px;top:574px;width:500px;height:64px;border:2px solid #dcdfe6;border-radius:8px;background:#fff;overflow:hidden"><div class="a" style="right:0;top:0;width:50px;height:100%;background:#f5f7fa;border-left:2px solid #dcdfe6"></div><div class="t" style="right:17px;top:18px;font-size:24px;color:#909399">D</div></div>
<div class="t" style="left:2312px;top:595px;font-size:24px;color:#0a0e5a;font-weight:bold">Aa</div>
<div class="t" style="left:2294px;top:678px;font-size:28px;color:#606266;font-weight:bold">页面资源</div>
<svg style="left:2768px;top:678px" width="26" height="26"><g fill="none" stroke="#409eff" stroke-width="2.2"><path d="M4.5 12 A8.2 8.2 0 0 1 19 7.5"/><path d="M20.5 13 A8.2 8.2 0 0 1 6 17.5"/></g><path d="M3 2.5 L3.5 9.5 L9.5 8Z M22.5 22.5 L22 15.5 L16 17Z" fill="#409eff"/></svg>
<div class="a" style="left:2294px;top:718px;width:500px;height:64px;border:2px solid #dcdfe6;border-radius:8px;background:#fff;overflow:hidden"></div>
<div class="t" style="left:2316px;top:736px;font-size:26px;color:#303133">物料-默认视图</div>
<svg style="left:2747px;top:743px" width="24" height="14"><path d="M1.5 1.5 L11 11 L20.5 1.5" fill="none" stroke="#c0c4cc" stroke-width="2"/></svg>
<div class="t" style="left:2294px;top:821px;font-size:28px;color:#606266;font-weight:bold">编辑模式</div>
<div class="a" style="left:2294px;top:862px;width:112px;height:64px;border:2px solid #409eff;border-radius:8px 0 0 8px;background:#fff;overflow:hidden"><svg style="position:absolute;right:0;top:0" width="36" height="36"><path d="M2 0 H36 V34Z" fill="#409eff"/><path d="M20 9 L25 15.5 L31.5 7" fill="none" stroke="#dfe8ff" stroke-width="1.8" opacity="0.9"/></svg></div>
<div class="t" style="left:2326px;top:884px;font-size:24px;color:#606266">行内</div>
<div class="a" style="left:2426px;top:862px;width:112px;height:64px;background:#f5f7fa"></div>
<div class="t" style="left:2458px;top:883px;font-size:24px;color:#606266">弹窗</div>
<div class="a" style="left:2558px;top:862px;width:170px;height:64px;background:#f5f7fa;border-radius:0 8px 8px 0"></div>
<div class="t" style="left:2590px;top:883px;font-size:24px;color:#606266">行内/弹窗</div>
<div class="t" style="left:2294px;top:966px;font-size:28px;color:#606266;font-weight:bold">分页</div>
<div class="a" style="left:2294px;top:1023px;width:28px;height:28px;border:2px solid #dcdfe6;border-radius:4px;background:#fff"></div>
<div class="t" style="left:2294px;top:1103px;font-size:28px;color:#606266;font-weight:bold">最小高度</div>
<div class="a" style="left:2294px;top:1142px;width:500px;height:64px;border:2px solid #dcdfe6;border-radius:8px;background:#fff;overflow:hidden"></div>
<div class="t" style="left:2316px;top:1161px;font-size:26px;color:#303133">100</div>
<div class="a" style="left:2265px;top:1252px;width:559px;height:2px;background:#e6e8ee"></div>
<div class="a" style="left:2265px;top:1254px;width:559px;height:60px;background:#f4f4f5"></div>
<div class="t" style="left:2305px;top:1272px;font-size:26px;color:#303133">验证</div>
<svg style="left:2789px;top:1274px" width="14" height="22"><path d="M1.5 1.5 L10.5 10.5 L1.5 19.5" fill="none" stroke="#333" stroke-width="1.6"/></svg>
<div class="a" style="left:2265px;top:1314px;width:559px;height:2px;background:#e6e8ee"></div>
<div class="a" style="left:2265px;top:1316px;width:559px;height:60px;background:#f4f4f5"></div>
<div class="t" style="left:2305px;top:1334px;font-size:26px;color:#303133">高级</div>
<svg style="left:2789px;top:1336px" width="14" height="22"><path d="M1.5 1.5 L10.5 10.5 L1.5 19.5" fill="none" stroke="#333" stroke-width="1.6"/></svg>
<div class="a" style="left:2265px;top:1376px;width:559px;height:2px;background:#e6e8ee"></div>
<div class="a" style="left:2265px;top:1378px;width:559px;height:55px;background:#f4f4f5"></div>
<div class="t" style="left:2305px;top:1396px;font-size:26px;color:#303133">样式</div>
<svg style="left:2789px;top:1398px" width="14" height="22"><path d="M1.5 1.5 L10.5 10.5 L1.5 19.5" fill="none" stroke="#333" stroke-width="1.6"/></svg>
<!-- strips -->
<div class="a" style="left:2826px;top:211px;width:36px;height:3px;background:#c9c9c9"></div>
<div class="a" style="left:2826px;top:406px;width:36px;height:3px;background:#c9c9c9"></div>
<div class="a" style="left:2826px;top:595px;width:36px;height:3px;background:#c9c9c9"></div>
<div class="a" style="left:2826px;top:807px;width:36px;height:3px;background:#c9c9c9"></div>
<div class="t" style="left:2833px;top:79px;font-size:24px;color:#111">数</div>
<div class="t" style="left:2833px;top:109.6px;font-size:24px;color:#111">据</div>
<div class="t" style="left:2833px;top:140.2px;font-size:24px;color:#111">源</div>
<div class="t" style="left:2833px;top:237px;font-size:24px;color:#111">离</div>
<div class="t" style="left:2833px;top:267.5px;font-size:24px;color:#111">线</div>
<div class="t" style="left:2833px;top:298px;font-size:24px;color:#111">资</div>
<div class="t" style="left:2833px;top:328.5px;font-size:24px;color:#111">源</div>
<div class="t" style="left:2833px;top:427px;font-size:24px;color:#111">三</div>
<div class="t" style="left:2833px;top:458px;font-size:24px;color:#111">方</div>
<div class="t" style="left:2833px;top:489px;font-size:24px;color:#111">服</div>
<div class="t" style="left:2833px;top:520px;font-size:24px;color:#111">务</div>
<div class="t" style="left:2833px;top:613px;font-size:24px;color:#111">命</div>
<div class="t" style="left:2833px;top:645px;font-size:24px;color:#111">名</div>
<div class="t" style="left:2833px;width:24px;text-align:center;top:676px;font-size:24px;color:#111">S</div>
<div class="t" style="left:2833px;width:24px;text-align:center;top:704px;font-size:24px;color:#111">q</div>
<div class="t" style="left:2833px;width:24px;text-align:center;top:730px;font-size:24px;color:#111">l</div>
<!-- bottom -->
<svg style="left:50px;top:1444px" width="38" height="36"><g fill="none" stroke="#6d6d6d" stroke-width="2" stroke-linejoin="round">
<path d="M13.5 10.8 V9 Q13.5 6 18 6 Q22 6 22 9 V10.8"/><path d="M9.3 10.8 H25.5 L27 13"/><path d="M9.3 10.8 Q9 11 9 14 V21 Q9 28 16 29.3"/><path d="M18 10.8 V18.5"/>
<path d="M5 12.5 L9 16.2 M5 26.8 L9 23.2 M31.2 12 L27.5 16"/></g>
<g fill="#6d6d6d"><rect x="19.5" y="19.2" width="12" height="2.8" rx="1"/><rect x="19.5" y="23.7" width="12" height="2.8" rx="1"/><rect x="19.5" y="28.2" width="12" height="2.8" rx="1"/></g></svg>
<div class="t" style="left:95px;top:1449px;font-size:24px;color:#000">调试信息</div>
<svg style="left:233px;top:1450px" width="30" height="24"><g fill="#6d6a6f"><rect x="1" y="1" width="4" height="4" rx="1"/><rect x="1" y="10" width="4" height="4" rx="1"/><rect x="1" y="18.5" width="4" height="4" rx="1"/><rect x="8" y="1" width="20" height="4" rx="1"/><rect x="8" y="10" width="20" height="4" rx="1"/><rect x="8" y="18.5" width="20" height="4" rx="1"/></g></svg>
<div class="t" style="left:280px;top:1449px;font-size:24px;color:#000">问题</div>
<svg style="left:362px;top:1445px" width="34" height="34"><g fill="none" stroke="#707070" stroke-width="1.8"><path d="M7 26.5 A15 15 0 1 1 10 29.5"/><path d="M16.8 7 V18 H25"/></g></svg>
<div class="t" style="left:405px;top:1449px;font-size:24px;color:#000">变更历史</div>
<svg style="left:541px;top:1448px" width="26" height="28"><g fill="#6d6b6f"><path d="M9 1.5 H15.5 L16.5 3 H23.5 V6.5 H1.5 V3 H8Z"/><path d="M3.5 8 H21.5 L20 25 Q19.8 27 17.8 27 H7.2 Q5.2 27 5 25Z"/></g></svg>
<div class="t" style="left:581px;top:1449px;font-size:24px;color:#000">回收站</div>
<div class="a" style="left:0;top:1486px;width:2862px;height:20px;overflow:hidden"><div class="t" style="left:28px;top:12px;font-size:24px;color:#222">查看资源「规格」详情</div><div class="a" style="left:202px;top:12px;width:2.5px;height:10px;background:#111"></div></div>
</body></html>
